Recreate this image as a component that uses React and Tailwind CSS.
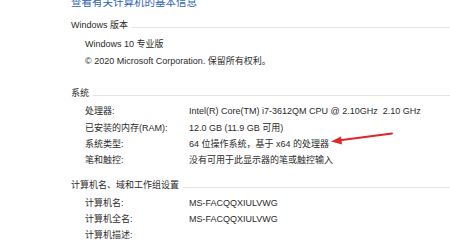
import React from "react";

const font = { fontFamily: '"Liberation Sans", "Noto Sans CJK SC", sans-serif' };

const Header = ({ children, className = "" }) => (
  <div className={`flex items-center h-[17px] ${className}`}>
    <span className="whitespace-nowrap">{children}</span>
    <div className="flex-1 h-px bg-[#e3e3e3] ml-1 mt-[3px]" />
  </div>
);

const Row = ({ label, value }) => (
  <div className="flex items-center h-[16.3px] pl-[14px]">
    <span className="w-[104px] shrink-0 whitespace-nowrap">{label}</span>
    <span className="whitespace-pre">{value}</span>
  </div>
);

const App = () => {
  return (
    <div
      className="relative w-[450px] h-[245px] overflow-hidden bg-white text-[9px] text-[#2b2b2b] pl-[71px]"
      style={font}
    >
      <div className="text-[10.5px] leading-[20px] text-[#2e66b4] -mt-[8px] whitespace-nowrap">
        查看有关计算机的基本信息
      </div>

      <Header className="mt-[5px]">Windows 版本</Header>
      <div className="pl-[14px] mt-[2px]">
        <div className="h-[17px] flex items-center">Windows 10 专业版</div>
        <div className="h-[17px] flex items-center whitespace-nowrap">
          © 2020 Microsoft Corporation. 保留所有权利。
        </div>
      </div>

      <Header className="mt-[15px]">系统</Header>
      <div className="mt-[2px]">
        <Row label="处理器:" value="Intel(R) Core(TM) i7-3612QM CPU @ 2.10GHz  2.10 GHz" />
        <Row label="已安装的内存(RAM):" value="12.0 GB (11.9 GB 可用)" />
        <Row label="系统类型:" value="64 位操作系统，基于 x64 的处理器" />
        <Row label="笔和触控:" value="没有可用于此显示器的笔或触控输入" />
      </div>

      <Header className="mt-[8px]">计算机名、域和工作组设置</Header>
      <div className="mt-[1px]">
        <Row label="计算机名:" value="MS-FACQQXIULVWG" />
        <Row label="计算机全名:" value="MS-FACQQXIULVWG" />
        <Row label="计算机描述:" value="" />
      </div>

      {/* red annotation arrow */}
      <svg
        className="absolute left-[328px] top-[130px]"
        width="68"
        height="16"
        viewBox="0 0 68 16"
      >
        <line x1="10" y1="10.5" x2="64" y2="3.5" stroke="#e0262a" strokeWidth="2" strokeLinecap="round" />
        <polygon points="3,11.5 13,6.5 14,14.5" fill="#e0262a" />
      </svg>
    </div>
  );
};

export default App;
